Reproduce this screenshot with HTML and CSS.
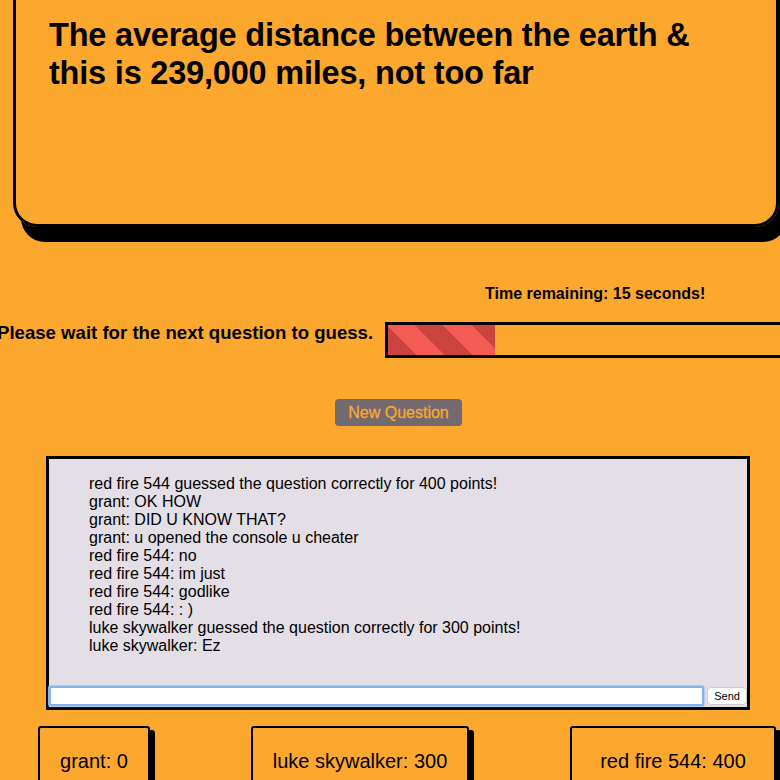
FILE: index.html
```html
<!DOCTYPE html>
<html>
<head>
<meta charset="utf-8">
<link rel="stylesheet" href="styles.css">
</head>
<body>
<div class="page">
  <div class="question-card">
    <h1 class="question">The average distance between the earth &amp; this is 239,000 miles, not too far</h1>
  </div>

  <div class="timer-row">
    <span class="timer">Time remaining: 15 seconds!</span>
  </div>

  <div class="status-row">
    <span class="status">Please wait for the next question to guess.</span>
    <div class="progress">
      <div class="progress-fill" style="width:107px"></div>
    </div>
  </div>

  <div class="button-row">
    <button class="new-question">New Question</button>
  </div>

  <div class="chat">
    <ul class="messages">
      <li>red fire 544 guessed the question correctly for 400 points!</li>
      <li>grant: OK HOW</li>
      <li>grant: DID U KNOW THAT?</li>
      <li>grant: u opened the console u cheater</li>
      <li>red fire 544: no</li>
      <li>red fire 544: im just</li>
      <li>red fire 544: godlike</li>
      <li>red fire 544: : )</li>
      <li>luke skywalker guessed the question correctly for 300 points!</li>
      <li>luke skywalker: Ez</li>
    </ul>
    <div class="chat-input-row">
      <input class="chat-input" type="text">
      <button class="send">Send</button>
    </div>
  </div>

  <div class="scores">
    <div class="score score-1">grant: 0</div>
    <div class="score score-2">luke skywalker: 300</div>
    <div class="score score-3">red fire 544: 400</div>
  </div>
</div>
</body>
</html>
```

FILE: styles.css
```css
html, body {
  margin: 0;
  padding: 0;
  background: #fca82f;
  overflow: hidden;
  height: 780px;
}

body {
  font-family: "Liberation Sans", Arial, Helvetica, sans-serif;
  color: #000;
}

.page {
  width: 780px;
  display: flex;
  flex-direction: column;
  overflow: hidden;
}

.question-card {
  margin: -30px 0 0 13px;
  width: 766px;
  height: 257px;
  border: 3px solid #000;
  border-radius: 24px;
  box-shadow: 8px 15px 0 #000;
  box-sizing: border-box;
  padding: 43px 30px 0 33px;
  flex: none;
}

.question {
  margin: 0;
  font-size: 32.5px;
  font-weight: bold;
  line-height: 38px;
  letter-spacing: -0.2px;
}

.timer-row {
  margin-top: 58px;
  padding-left: 485px;
  height: 20px;
}

.timer {
  font-size: 16px;
  font-weight: bold;
}

.status-row {
  margin-top: 17px;
  display: flex;
  align-items: flex-start;
  margin-left: -3px;
  gap: 12px;
  width: 900px;
}

.status {
  font-size: 18.6px;
  font-weight: bold;
  line-height: 22px;
  white-space: nowrap;
}

.progress {
  width: 420px;
  height: 36px;
  border: 3px solid #000;
  box-sizing: border-box;
  flex: none;
}

.progress-fill {
  height: 100%;
  background: repeating-linear-gradient(45deg, #cc443f 0 20px, #f55b55 20px 40px);
}

.button-row {
  margin-top: 41px;
  display: flex;
  justify-content: center;
  padding-left: 17px;
}

.new-question {
  font-family: "Liberation Sans", Arial, sans-serif;
  font-size: 16px;
  color: #fca82f;
  background: #736a6f;
  border: none;
  border-radius: 4px;
  height: 27px;
  padding: 0 13px;
  -webkit-text-stroke: 0.3px #fca82f;
}

.chat {
  margin: 30px 0 0 46px;
  width: 704px;
  height: 254px;
  border: 3px solid #000;
  box-sizing: border-box;
  background: #e4dee6;
  display: flex;
  flex-direction: column;
  flex: none;
}

.messages {
  list-style: none;
  margin: 0;
  padding: 16px 0 0 40px;
  flex: 1;
  font-size: 16px;
  line-height: 18px;
}

.chat-input-row {
  display: flex;
  align-items: center;
  gap: 3px;
  padding-bottom: 1px;
}

.chat-input {
  width: 657px;
  height: 20px;
  box-sizing: border-box;
  border: 2px solid #86b3ea;
  border-radius: 2px;
  background: #fff;
  box-shadow: 0 0 1px 1px #a9c9f0;
  margin: 0;
}

.send {
  font-family: "Liberation Sans", Arial, sans-serif;
  font-size: 11px;
  height: 18px;
  width: 40px;
  padding: 0;
  background: #fff;
  border: 1px solid #ccc;
  border-radius: 4px;
}

.scores {
  margin-top: 16px;
  display: flex;
  padding-left: 38px;
  gap: 101px;
}

.score {
  border: 2px solid #000;
  border-radius: 3px;
  box-shadow: 5px 4px 0 #000;
  height: 70px;
  box-sizing: border-box;
  padding-top: 22px;
  font-size: 20px;
  text-align: center;
  flex: none;
}

.score-1 { width: 112px; }
.score-2 { width: 218px; }
.score-3 { width: 206px; }
```
